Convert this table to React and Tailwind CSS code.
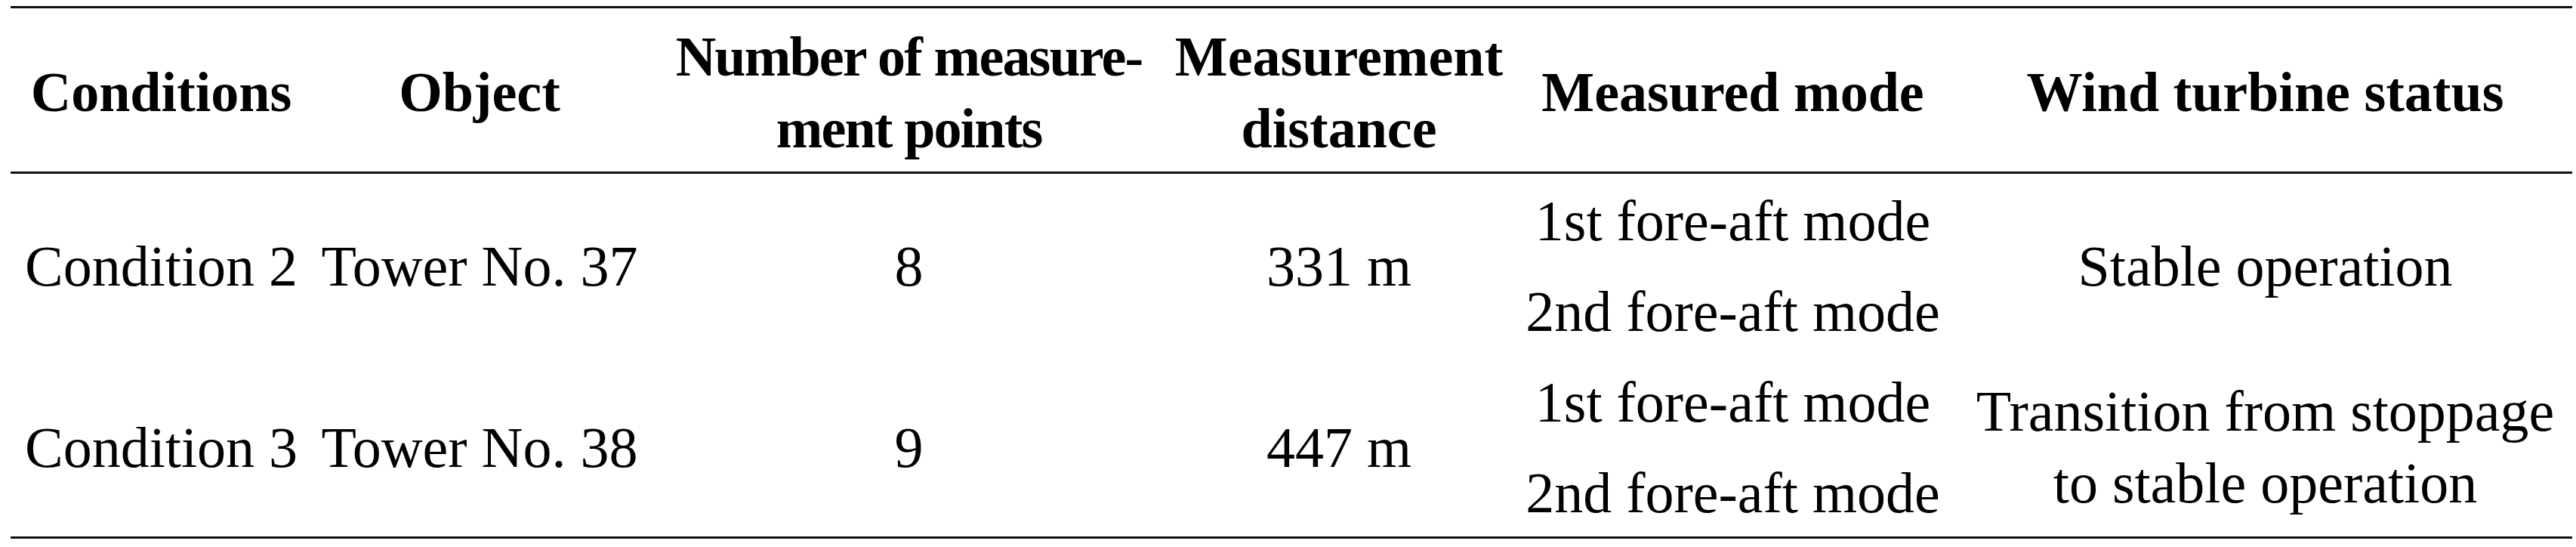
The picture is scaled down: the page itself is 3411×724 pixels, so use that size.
const rows = [
  {
    condition: "Condition 2",
    object: "Tower No. 37",
    points: "8",
    distance: "331 m",
    status: ["Stable operation"],
  },
  {
    condition: "Condition 3",
    object: "Tower No. 38",
    points: "9",
    distance: "447 m",
    status: ["Transition from stoppage", "to stable operation"],
  },
];

const cols = "grid grid-cols-[399px_444px_693px_446px_597px_813px]";

function Cell({ className = "", children }) {
  return (
    <div className={`flex flex-col items-center justify-center text-center whitespace-nowrap ${className}`}>
      {children}
    </div>
  );
}

export default function App() {
  return (
    <div className="min-h-[724px] w-[3411px] bg-white pt-[8px] pl-[14px] font-['Liberation_Serif','Times_New_Roman',serif] text-black">
      <div className="w-[3392px] border-y-[3px] border-[#111]">
        {/* header */}
        <div className={`${cols} h-[219px] border-b-[3px] border-[#111] text-[74px] font-bold leading-[95px]`}>
          <Cell className="pt-[6px]">Conditions</Cell>
          <Cell className="pt-[6px]">Object</Cell>
          <Cell className="pt-[8px] tracking-[-0.025em]">
            <span>Number of measure-</span>
            <span>ment points</span>
          </Cell>
          <Cell className="pt-[8px]">
            <span>Measurement</span>
            <span>distance</span>
          </Cell>
          <Cell className="pt-[6px]">Measured mode</Cell>
          <Cell className="pt-[6px]">Wind turbine status</Cell>
        </div>

        {/* body */}
        <div className="text-[76px] leading-[95px]">
          {rows.map((r, i) => (
            <div key={i} className={`${cols} grid-rows-[120px_120px]`}>
              <Cell className="row-span-2 pt-[4px]">{r.condition}</Cell>
              <Cell className="row-span-2 pt-[4px]">{r.object}</Cell>
              <Cell className="row-span-2 pt-[4px]">{r.points}</Cell>
              <Cell className="row-span-2 pt-[4px]">{r.distance}</Cell>
              <Cell className="col-start-5 row-start-1 pt-[4px]">1st fore-aft mode</Cell>
              <Cell className="col-start-5 row-start-2 pt-[4px]">2nd fore-aft mode</Cell>
              <Cell className="col-start-6 row-start-1 row-span-2 pt-[4px]">
                {r.status.map((s) => (
                  <span key={s}>{s}</span>
                ))}
              </Cell>
            </div>
          ))}
        </div>
      </div>
    </div>
  );
}
